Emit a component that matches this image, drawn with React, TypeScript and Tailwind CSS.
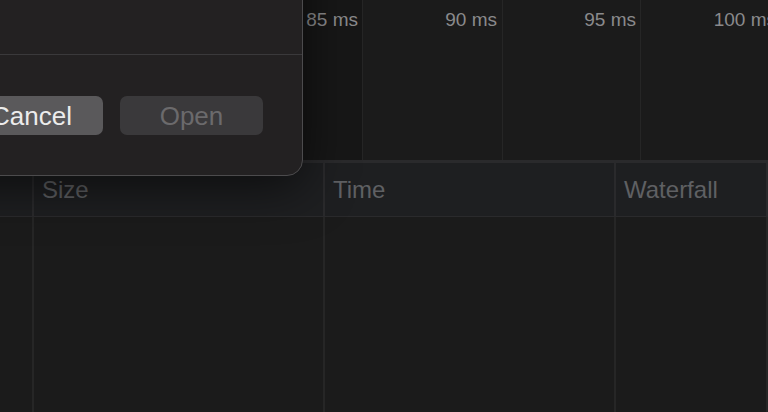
export default function App() {
  const ticks = [
    { label: '85 ms', w: 'w-[363px]', pr: 'pr-[4px]', bg: 'bg-[#171717]' },
    { label: '90 ms', w: 'w-[140px]', pr: 'pr-[5px]', bg: 'bg-[#1b1b1b]' },
    { label: '95 ms', w: 'w-[138px]', pr: 'pr-[4px]', bg: 'bg-[#1b1b1b]' },
    { label: '100 ms', w: 'w-[140px]', pr: 'pr-[4px]', bg: 'bg-[#1b1b1b]' },
  ];

  const cols = [
    { name: '', w: 'w-[34px]' },
    { name: 'Size', w: 'w-[291px]' },
    { name: 'Time', w: 'w-[291px]' },
    { name: 'Waterfall', w: 'flex-1' },
  ];

  return (
    <div
      className="relative w-[768px] h-[412px] overflow-hidden bg-[#1b1b1b] flex flex-col"
      style={{ fontFamily: '"Liberation Sans", Arial, sans-serif' }}
    >
      {/* timeline overview */}
      <div className="h-[160px] flex shrink-0">
        {ticks.map((t) => (
          <div
            key={t.label}
            className={`${t.w} ${t.pr} ${t.bg} shrink-0 border-r border-[#262626] pt-[10px] text-right text-[19px] leading-none text-[#8a8a8c]`}
          >
            {t.label}
          </div>
        ))}
      </div>

      {/* header */}
      <div className="h-[57px] flex shrink-0 border-t-[3px] border-b border-[#2a2a2c] bg-[#1e1f21]">
        {cols.map((c) => (
          <div
            key={c.name || 'first'}
            className={`${c.w} shrink-0 border-r-2 border-[#2a2a2c] pl-[8px] pt-[15px] text-[24px] leading-none text-[#5f6063]`}
          >
            {c.name}
          </div>
        ))}
      </div>

      {/* body */}
      <div className="flex flex-1">
        {cols.map((c) => (
          <div key={c.name || 'first'} className={`${c.w} shrink-0 border-r-2 border-[#262626]`} />
        ))}
      </div>

      {/* dialog sheet */}
      <div className="absolute left-[-300px] top-[-99px] w-[603px] h-[275px] rounded-[16px] border border-[#4c4b4d] bg-[#232122] shadow-[0_10px_50px_rgba(0,0,0,0.6)] flex flex-col">
        <div className="h-[153px] border-b border-[#3a393b]" />
        <div className="flex justify-end gap-[17px] pt-[41px] pr-[39px]">
          <button className="w-[143px] h-[39px] rounded-[7px] bg-[#5a595b] text-[26px] leading-none text-[#ececec]">
            Cancel
          </button>
          <button className="w-[143px] h-[39px] rounded-[7px] bg-[#3a393b] text-[26px] leading-none text-[#6b6a6c]">
            Open
          </button>
        </div>
      </div>
    </div>
  );
}
